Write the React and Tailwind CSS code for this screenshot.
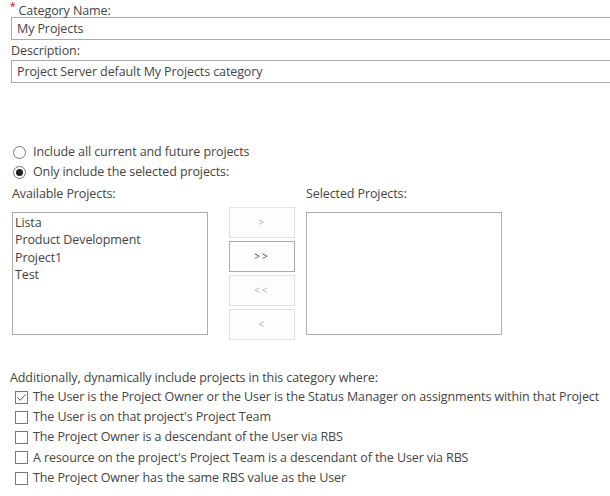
import { useState } from 'react';

const font = { fontFamily: '"Open Sans", "Noto Sans", sans-serif' };

function Radio({ checked, label }) {
  return (
    <div className="flex items-center h-[20px]">
      <span className="ml-[13px] w-[13px] h-[13px] rounded-full border border-[#777] bg-white flex items-center justify-center">
        {checked && <span className="w-[7px] h-[7px] rounded-full bg-[#222]" />}
      </span>
      <span className="ml-[7px]">{label}</span>
    </div>
  );
}

function Check({ checked, label }) {
  return (
    <div className="flex items-center h-[20.25px]">
      <span className="ml-[15px] w-[13px] h-[13px] shrink-0 border border-[#777] bg-white flex items-center justify-center">
        {checked && (
          <svg width="11" height="11" viewBox="0 0 11 11">
            <path d="M1.5 5.5 L4.3 8.3 L9.5 2.5" fill="none" stroke="#555" strokeWidth="1" />
          </svg>
        )}
      </span>
      <span className="ml-[5px] whitespace-nowrap">{label}</span>
    </div>
  );
}

function MoveButton({ label, enabled }) {
  return (
    <button
      className={`w-[66px] h-[31px] border text-[10px] tracking-[2px] flex items-center justify-center ${
        enabled ? 'border-[#ababab] bg-[#fdfdfd] text-[#444]' : 'border-[#e1e1e1] bg-[#fdfdfd] text-[#b1b1b1]'
      }`}
    >
      {label}
    </button>
  );
}

export default function App() {
  const [projects] = useState(['Lista', 'Product Development', 'Project1', 'Test']);

  return (
    <div
      className="w-[610px] h-[496px] bg-white text-[#444] text-[12.5px] tracking-[-0.1px] overflow-hidden"
      style={font}
    >
      <div className="h-[17px] pl-[10px] pt-[1px] leading-[17px] whitespace-nowrap">
        <span className="text-[#bf0000] text-[10px] leading-none align-super">*</span> Category Name:
      </div>
      <div className="ml-[11px] w-[602px] h-[23px] border border-[#ababab] pl-[5px] leading-[21px]">My Projects</div>
      <div className="h-[20px] pl-[11px] leading-[21px]">Description:</div>
      <div className="ml-[11px] w-[602px] h-[23px] border border-[#ababab] pl-[5px] leading-[21px] whitespace-nowrap">
        Project Server default My Projects category
      </div>

      <div className="mt-[59px]">
        <Radio label="Include all current and future projects" />
        <Radio checked label="Only include the selected projects:" />
      </div>

      <div className="flex mt-[2px]">
        <div className="ml-[12px] w-[196px]">
          <div className="h-[20px] leading-[20px]">Available Projects:</div>
          <div className="mt-[8px] h-[123px] border border-[#ababab] pt-[1px] pl-[2px]">
            {projects.map((p) => (
              <div key={p} className="h-[17.3px] leading-[17.3px]">{p}</div>
            ))}
          </div>
        </div>
        <div className="ml-[21px] pt-[23px] flex flex-col gap-[3px]">
          <MoveButton label=">" />
          <MoveButton label=">>" enabled />
          <MoveButton label="<<" />
          <MoveButton label="<" />
        </div>
        <div className="ml-[11px] w-[196px]">
          <div className="h-[20px] leading-[20px]">Selected Projects:</div>
          <div className="mt-[8px] h-[123px] border border-[#ababab]" />
        </div>
      </div>

      <div className="mt-[28px] h-[19px] leading-[19px] pl-[10px]">
        Additionally, dynamically include projects in this category where:
      </div>
      <Check checked label="The User is the Project Owner or the User is the Status Manager on assignments within that Project" />
      <Check label="The User is on that project's Project Team" />
      <Check label="The Project Owner is a descendant of the User via RBS" />
      <Check label="A resource on the project's Project Team is a descendant of the User via RBS" />
      <Check label="The Project Owner has the same RBS value as the User" />
    </div>
  );
}
